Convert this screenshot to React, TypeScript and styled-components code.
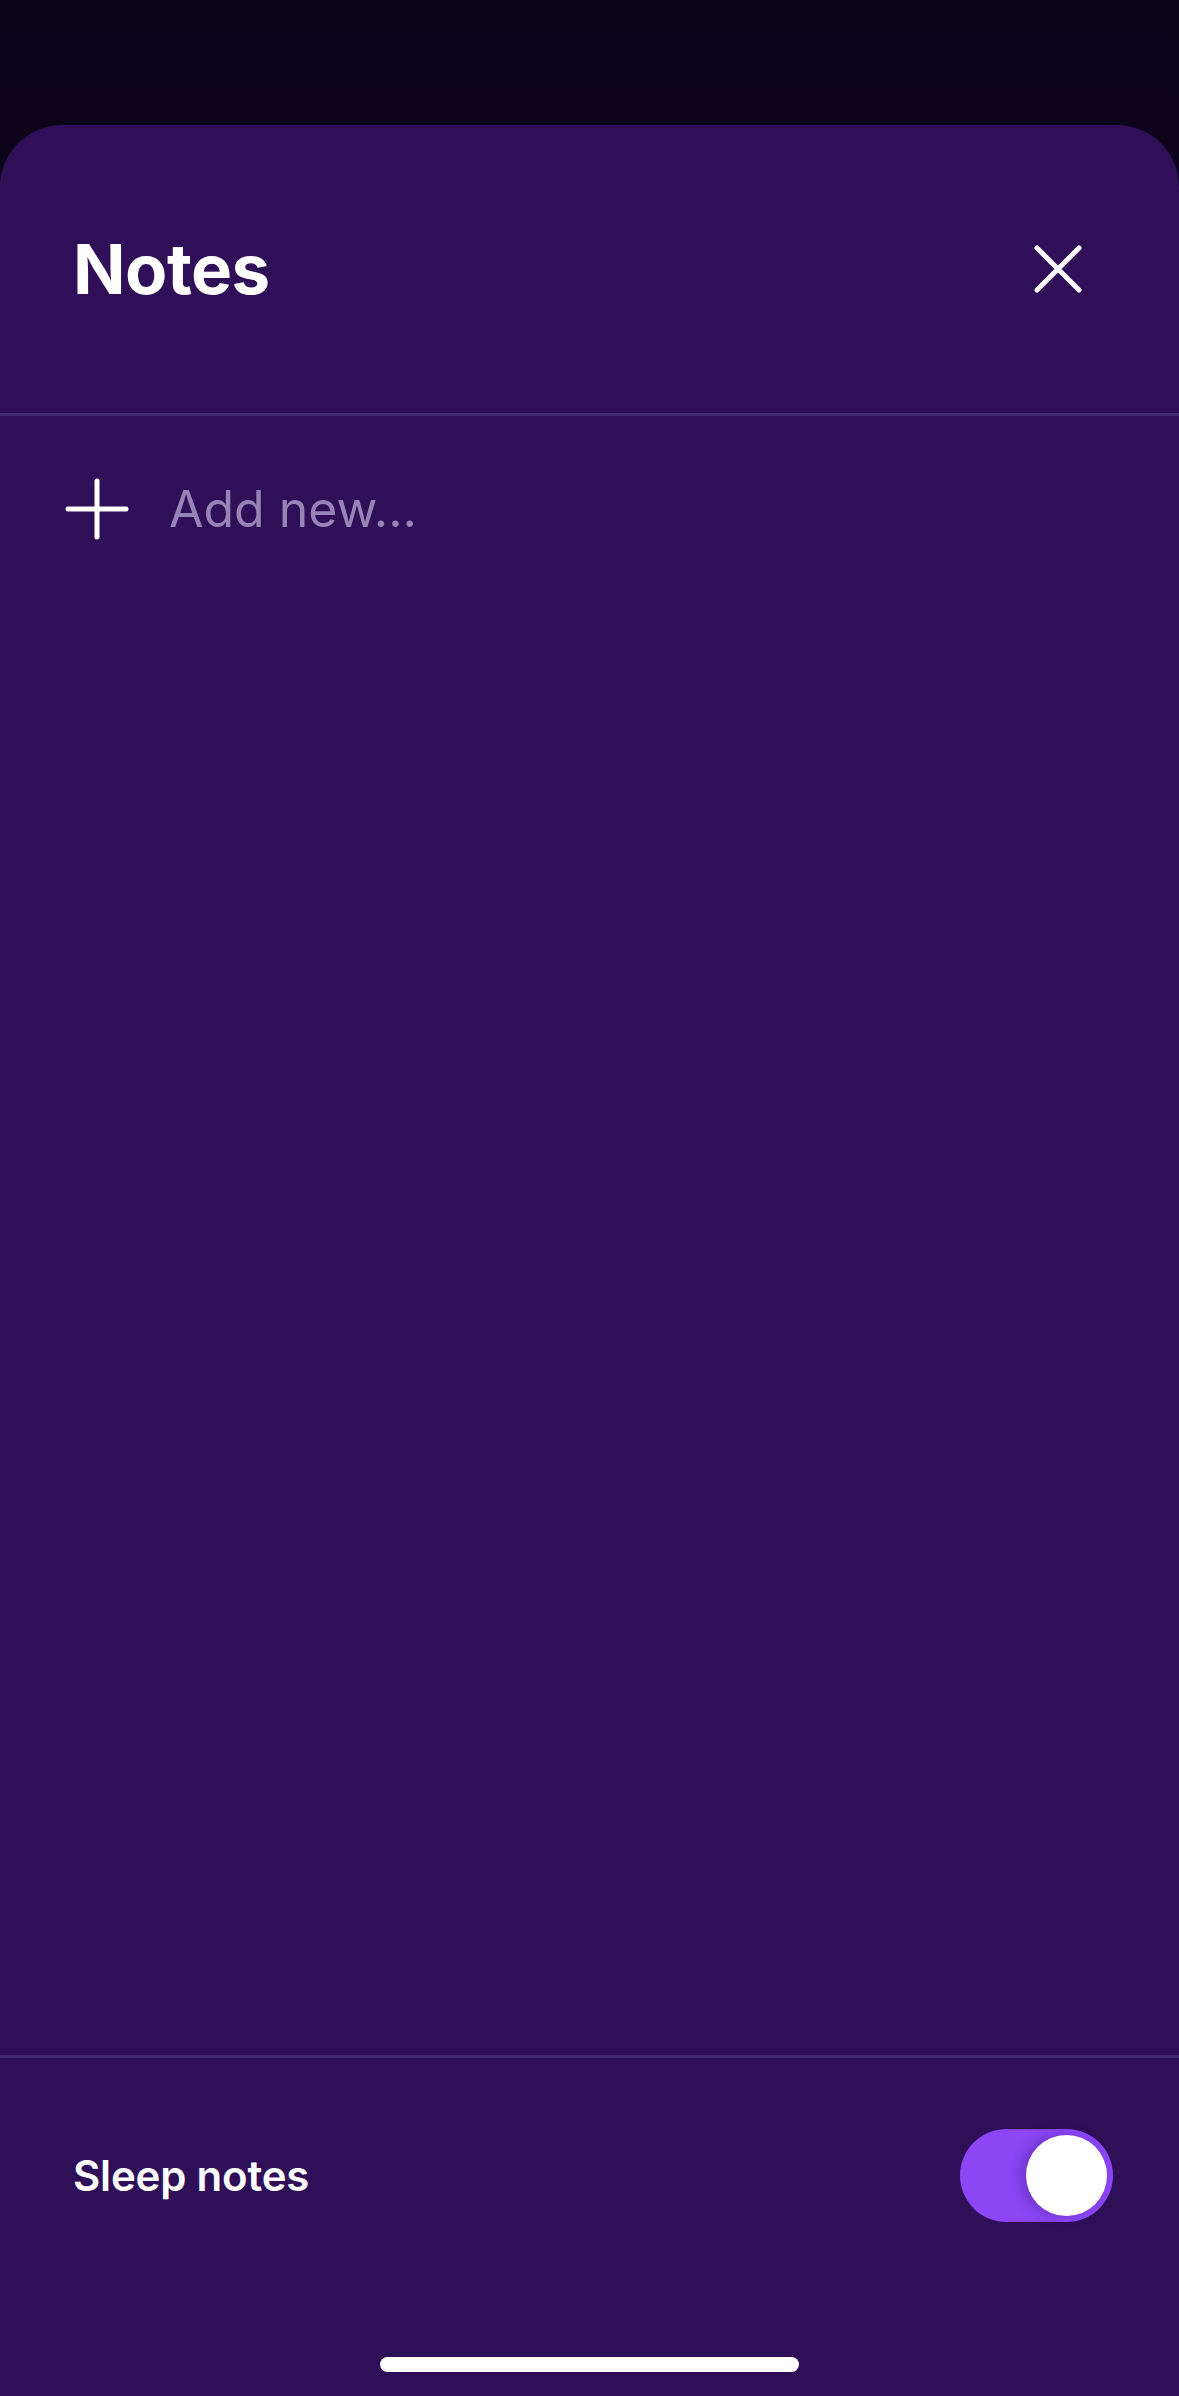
import React, { useState } from "react";
import styled, { createGlobalStyle } from "styled-components";

const GlobalStyle = createGlobalStyle`
  html, body {
    margin: 0;
    padding: 0;
    background: #0e0520;
  }
  body {
    font-family: Inter, "Noto Sans", "Liberation Sans", sans-serif;
    -webkit-font-smoothing: antialiased;
  }
`;

const Screen = styled.div`
  display: flex;
  flex-direction: column;
  width: 1179px;
  height: 2396px;
  background: linear-gradient(180deg, #0c0419 0%, #14072c 100%);
  overflow: hidden;
`;

const Backdrop = styled.div`
  height: 125px;
  flex: none;
`;

const Sheet = styled.div`
  flex: 1;
  display: flex;
  flex-direction: column;
  background: #2e0f58;
  border-radius: 62px 62px 0 0;
`;

const Header = styled.div`
  display: flex;
  align-items: center;
  justify-content: space-between;
  height: 288px;
  padding: 0 96px 0 73px;
`;

const Title = styled.h1`
  margin: 0;
  color: #ffffff;
  font-size: 69px;
  font-weight: 700;
  letter-spacing: -0.5px;
`;

const IconButton = styled.button`
  display: flex;
  align-items: center;
  justify-content: center;
  padding: 0;
  border: none;
  background: none;
  cursor: pointer;
`;

const Divider = styled.div`
  height: 3px;
  flex: none;
  background: #45296f;
`;

const AddRow = styled.div`
  display: flex;
  align-items: center;
  gap: 40px;
  height: 60px;
  padding: 63px 0 0 65px;
`;

const AddInput = styled.input`
  flex: 1;
  border: none;
  outline: none;
  background: transparent;
  padding: 0;
  color: #ffffff;
  font-family: inherit;
  font-size: 50px;
  font-weight: 400;
  &::placeholder {
    color: #9783b6;
  }
`;

const NoteList = styled.div`
  flex: 1;
`;

const Footer = styled.div`
  display: flex;
  flex-direction: column;
  align-items: center;
  padding: 71px 0 24px;
`;

const SettingRow = styled.div`
  align-self: stretch;
  display: flex;
  align-items: center;
  justify-content: space-between;
  padding: 0 66px 0 73px;
`;

const SettingLabel = styled.span`
  color: #ffffff;
  font-size: 42px;
  font-weight: 600;
  letter-spacing: -0.2px;
`;

const Track = styled.button<{ $on: boolean }>`
  position: relative;
  flex: none;
  width: 153px;
  height: 93px;
  padding: 0;
  border: none;
  border-radius: 47px;
  background: ${(p) => (p.$on ? "#8c46f6" : "#4a2f78")};
  cursor: pointer;
`;

const Knob = styled.span<{ $on: boolean }>`
  position: absolute;
  top: 6px;
  left: ${(p) => (p.$on ? "66px" : "6px")};
  width: 81px;
  height: 81px;
  border-radius: 50%;
  background: #ffffff;
  box-shadow: -6px 0 14px rgba(60, 20, 120, 0.35);
  transition: left 0.2s;
`;

const HomeIndicator = styled.div`
  width: 419px;
  height: 15px;
  margin-top: 135px;
  border-radius: 8px;
  background: #ffffff;
`;

function CloseIcon() {
  return (
    <svg width="50" height="50" viewBox="0 0 50 50" fill="none">
      <path
        d="M4 4L46 46M46 4L4 46"
        stroke="#ffffff"
        strokeWidth="5"
        strokeLinecap="round"
      />
    </svg>
  );
}

function PlusIcon() {
  return (
    <svg width="64" height="62" viewBox="0 0 64 62" fill="none">
      <path
        d="M32 3V59M3 31H61"
        stroke="#ffffff"
        strokeWidth="5"
        strokeLinecap="round"
      />
    </svg>
  );
}

export default function App() {
  const [sleepNotes, setSleepNotes] = useState(true);
  const [draft, setDraft] = useState("");

  return (
    <>
      <GlobalStyle />
      <Screen>
        <Backdrop />
        <Sheet>
          <Header>
            <Title>Notes</Title>
            <IconButton aria-label="Close">
              <CloseIcon />
            </IconButton>
          </Header>
          <Divider />
          <AddRow>
            <PlusIcon />
            <AddInput
              placeholder="Add new..."
              value={draft}
              onChange={(e) => setDraft(e.target.value)}
            />
          </AddRow>
          <NoteList />
          <Divider />
          <Footer>
            <SettingRow>
              <SettingLabel>Sleep notes</SettingLabel>
              <Track
                $on={sleepNotes}
                aria-label="Sleep notes"
                onClick={() => setSleepNotes(!sleepNotes)}
              >
                <Knob $on={sleepNotes} />
              </Track>
            </SettingRow>
            <HomeIndicator />
          </Footer>
        </Sheet>
      </Screen>
    </>
  );
}
